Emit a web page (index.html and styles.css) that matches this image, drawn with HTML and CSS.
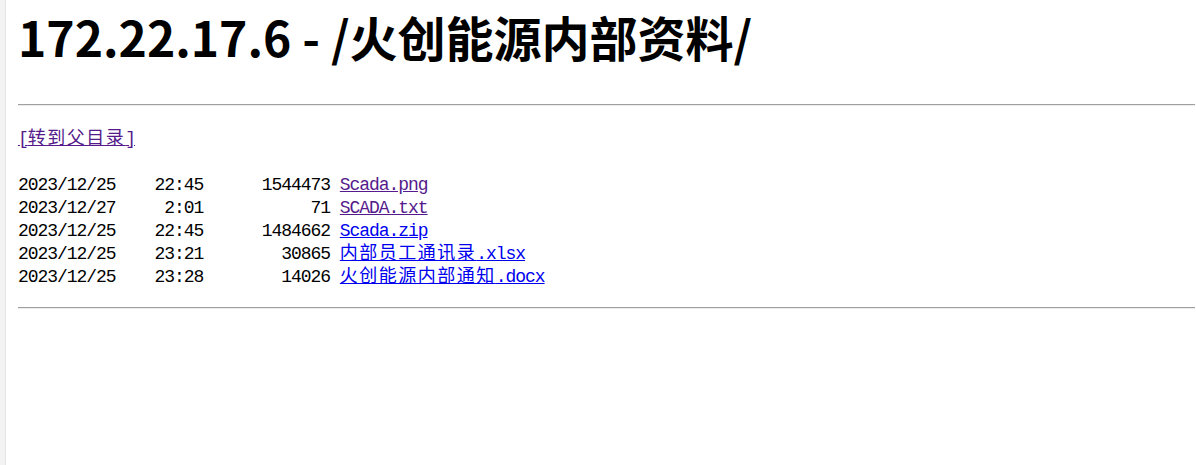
FILE: index.html
```html
<!DOCTYPE html>
<html lang="zh-CN">
<head>
<meta charset="utf-8">
<title>172.22.17.6 - /火创能源内部资料/</title>
<link rel="stylesheet" href="styles.css">
</head>
<body>
<div class="strip"></div>
<main class="page">
  <h1 class="title">172.22.17.6 - /火创能源内部资料/</h1>
  <hr class="rule rule-top">
  <div class="listing">
    <div class="row"><a class="visited" href="#">[<span class="cjk">转到父目录</span>]</a></div>
    <div class="row"> </div>
    <div class="row">2023/12/25    22:45      1544473 <a class="visited" href="#">Scada.png</a></div>
    <div class="row">2023/12/27     2:01           71 <a class="visited" href="#">SCADA.txt</a></div>
    <div class="row">2023/12/25    22:45      1484662 <a href="#">Scada.zip</a></div>
    <div class="row">2023/12/25    23:21        30865 <a href="#"><span class="cjk">内部员工通讯录</span>.xlsx</a></div>
    <div class="row">2023/12/25    23:28        14026 <a href="#"><span class="cjk">火创能源内部通知</span>.docx</a></div>
  </div>
  <hr class="rule rule-bottom">
</main>
</body>
</html>
```
FILE: styles.css
```css
html, body {
  margin: 0;
  padding: 0;
  background: #ffffff;
}
body {
  display: flex;
  min-height: 465px;
  color: #000;
}
.strip {
  width: 5px;
  flex: 0 0 5px;
  background: #f3f3f3;
  border-right: 1px solid #e4e4e4;
}
.page {
  flex: 1;
  padding: 0 1px 0 12px;
}
.title {
  margin: 9px 0 0 0;
  font-family: "Noto Sans CJK SC", "Noto Sans", sans-serif;
  font-weight: 700;
  font-size: 48px;
  line-height: 54px;
  white-space: nowrap;
}
.rule {
  border: 0;
  border-top: 1px solid #a0a0a0;
  border-bottom: 1px solid #ececec;
  height: 0;
  margin: 0;
}
.rule-top {
  margin-top: 41px;
}
.rule-bottom {
  margin-top: 18px;
}
.listing {
  margin-top: 22px;
  font-family: "Liberation Mono", monospace;
  font-size: 18px;
  letter-spacing: -1.05px;
}
.row {
  white-space: pre;
  height: 23px;
  line-height: 23px;
}
.cjk {
  font-family: "Noto Sans CJK SC", sans-serif;
  font-weight: 400;
  letter-spacing: 1.5px;
  line-height: 0;
}
a {
  color: #0000ee;
  text-decoration: underline;
}
a.visited {
  color: #551a8b;
}
```
